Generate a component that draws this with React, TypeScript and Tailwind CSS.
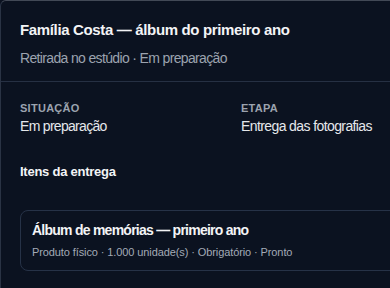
export default function App() {
  const font = { fontFamily: '"Liberation Sans", Arial, sans-serif' };
  return (
    <div className="min-h-screen bg-[#0b1220] overflow-hidden" style={font}>
      <div className="w-[466px] min-h-[300px] rounded-tl-md border border-[#2a3344] border-t-[#424956] bg-[#0b1220]">
        <div className="px-[19px] pt-[18px] pb-[13px] border-b border-[#263043]">
          <h1 className="text-[15px] leading-[22px] font-bold tracking-[-0.35px] text-[#f3f4f6]">Família Costa — álbum do primeiro ano</h1>
          <p className="mt-[7px] text-sm leading-5 tracking-[-0.65px] text-[#9ca3af]">Retirada no estúdio · Em preparação</p>
        </div>
        <div className="px-[19px] pt-[18px]">
          <div className="grid grid-cols-2 gap-4">
            <div>
              <div className="text-[11px] leading-4 font-bold text-[#9ca3af] tracking-wide">SITUAÇÃO</div>
              <div className="text-sm leading-5 tracking-[-0.7px] text-[#e5e7eb]">Em preparação</div>
            </div>
            <div>
              <div className="text-[11px] leading-4 font-bold text-[#9ca3af] tracking-wide">ETAPA</div>
              <div className="text-sm leading-5 tracking-[-0.6px] text-[#e5e7eb]">Entrega das fotografias</div>
            </div>
          </div>
          <h2 className="mt-[26px] text-[13px] leading-5 font-bold tracking-[-0.25px] text-[#f3f4f6]">Itens da entrega</h2>
          <div className="mt-[28px] rounded-lg border border-[#263247] px-[11px] pt-[9px] pb-[10px]">
            <div className="text-sm leading-5 font-bold tracking-[-0.75px] text-[#f3f4f6]">Álbum de memórias — primeiro ano</div>
            <div className="mt-1 text-[11px] leading-4 tracking-[-0.1px] text-[#a3aab6]">Produto físico · 1.000 unidade(s) · Obrigatório · Pronto</div>
          </div>
        </div>
      </div>
    </div>
  );
}
